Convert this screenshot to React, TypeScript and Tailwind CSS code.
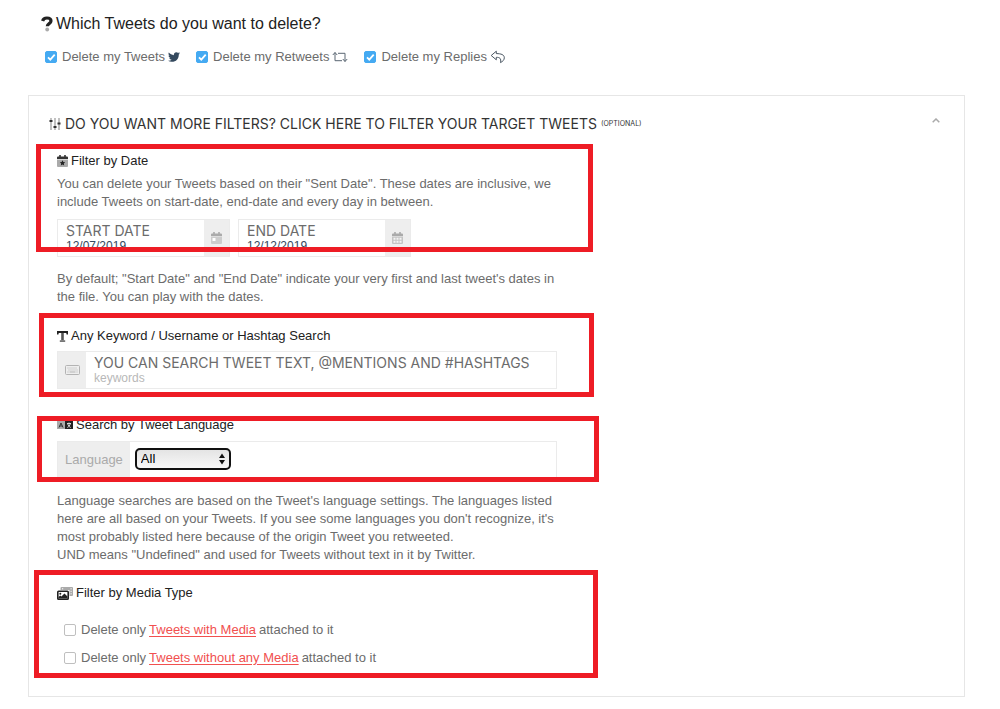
import { useState } from "react";
import type { ReactNode } from "react";
import { FaTwitter } from "react-icons/fa";

const QuestionIcon = () => (
  <svg viewBox="0 0 12 16" className="h-4 w-3 shrink-0" aria-hidden="true">
    <path
      d="M1.600 5C2.200 2.800 3.700 2 5.900 2c2.600 0 4.100 1.200 4.100 3 0 2.700-3.700 2.600-3.700 5.300"
      fill="none"
      stroke="#222"
      strokeWidth="3.200"
    />
    <circle cx="6.200" cy="13.500" r="1.900" fill="#aaa" />
  </svg>
);

const RetweetIcon = () => (
  <svg viewBox="0 0 16 12" className="h-3 w-4 shrink-0" fill="none" stroke="#5b6773" aria-hidden="true">
    <path d="M.8 4 3 1.500 5.200 4M3 1.500V9.700H10M6 2.300h7v8.200M10.800 8l2.200 2.500L15.200 8" />
  </svg>
);

const ReplyIcon = () => (
  <svg viewBox="0 0 16 14" className="h-[14px] w-4 shrink-0" fill="none" stroke="#4b5763" strokeLinejoin="round" aria-hidden="true">
    <path d="M6.300 1.200 1.200 5.500l5.100 4.300V7.300c3.300 0 5.100.9 4.200 5.300 2.400-1.300 3.800-2.700 3.800-4.800 0-3.100-3.100-4.200-8-4.200z" />
  </svg>
);

const SlidersIcon = () => (
  <svg viewBox="0 0 12 14" className="h-[14px] w-3 shrink-0" aria-hidden="true">
    <path d="M2 1v12M6 1v12M10 1v12" stroke="#999" strokeWidth="1.200" />
    <path d="M.5 4h3M4.500 10h3M8.500 6.500h3" stroke="#333" strokeWidth="1.800" />
  </svg>
);

const CalendarStarIcon = () => (
  <svg viewBox="0 0 11 12" className="h-3 w-[11px] shrink-0" aria-hidden="true">
    <path d="M0 4.500h11V11a1 1 0 0 1-1 1H1a1 1 0 0 1-1-1z" fill="#aaa" />
    <path d="M0 4V2.500a1 1 0 0 1 1-1h1.200V0h1.600v1.500h3.400V0h1.600v1.500H10a1 1 0 0 1 1 1V4z" fill="#333" />
    <path d="m5.500 5.300.8 1.700 1.900.2-1.400 1.300.4 1.900-1.700-1-1.700 1 .4-1.900-1.400-1.300 1.900-.2z" fill="#222" />
  </svg>
);

const CalendarDayIcon = () => (
  <svg viewBox="0 0 11 12" className="h-3 w-[11px]" aria-hidden="true">
    <path d="M0 4.500h11V11a1 1 0 0 1-1 1H1a1 1 0 0 1-1-1z" fill="#ccc" />
    <path d="M0 4V2.500a1 1 0 0 1 1-1h1.200V0h1.600v1.500h3.400V0h1.600v1.500H10a1 1 0 0 1 1 1V4z" fill="#aaa" />
    <path d="M1.500 6h3v3h-3z" fill="#fff" />
  </svg>
);

const CalendarGridIcon = () => (
  <svg viewBox="0 0 11 12" className="h-3 w-[11px]" aria-hidden="true">
    <path d="M0 4.500h11V11a1 1 0 0 1-1 1H1a1 1 0 0 1-1-1z" fill="#c4c4c4" />
    <path d="M0 4V2.500a1 1 0 0 1 1-1h1.200V0h1.600v1.500h3.400V0h1.600v1.500H10a1 1 0 0 1 1 1V4z" fill="#aaa" />
    <path d="M1.500 5.700h2v2h-2zm3 0h2v2h-2zm3 0h2v2h-2zm-6 3h2v2h-2zm3 0h2v2h-2zm3 0h2v2h-2z" fill="#f4f4f4" />
  </svg>
);

const TextIcon = () => (
  <svg viewBox="0 0 11 11" className="h-[11px] w-[11px] shrink-0" aria-hidden="true">
    <path d="M4.200 2h2.600v7.500H4.200z" fill="#555" />
    <path d="M0 0h11v3.500H9.600L9.200 2H1.800l-.4 1.500H0z" fill="#222" />
    <path d="M2.800 9.200h5.400V11H2.800z" fill="#777" />
  </svg>
);

const KeyboardIcon = () => (
  <svg viewBox="0 0 15 10" className="h-[10px] w-[15px]" fill="none" stroke="#b3b3b3" aria-hidden="true">
    <rect x=".5" y=".5" width="14" height="9" rx="1" />
    <path d="M2.500 3h10M3.500 5h9" strokeDasharray="1 1" />
    <path d="M2.500 7h1M4.500 7h6M11.500 7h1" />
  </svg>
);

const LanguageIcon = () => (
  <svg viewBox="0 0 16 10" className="h-[10px] w-4 shrink-0" aria-hidden="true">
    <path d="M0 1h8v8H0z" fill="#aaa" />
    <path d="M8 1h8v8H8z" fill="#222" />
    <path d="M2 7.500 4 3l2 4.500M2.800 6h2.400" fill="none" stroke="#333" />
    <path d="M10 3.500h4M12 2.500v1M13.300 3.700c-.5 2-1.500 3-3 3.800M10.700 3.700c.5 2 1.500 3 3 3.800" fill="none" stroke="#fff" strokeWidth=".8" />
  </svg>
);

const MediaIcon = () => (
  <svg viewBox="0 0 16 13" className="h-[13px] w-4 shrink-0" aria-hidden="true">
    <path d="M4.500 0H15a1 1 0 0 1 1 1v7a1 1 0 0 1-1 1h-2.500V3H3.500V1a1 1 0 0 1 1-1z" fill="#aaa" />
    <path d="M13.500 1.800h1.200M13.500 4.300h1.200M13.500 6.800h1.200M5 1.800h1.200" stroke="#fff" />
    <rect x=".8" y="4.300" width="10.400" height="7.900" rx=".8" fill="#fff" stroke="#222" strokeWidth="1.600" />
    <circle cx="3.300" cy="6.700" r="1" fill="#222" />
    <path d="M1.500 11.500V10l1.700-1.500 1.200 1L7.500 6.500l3 3v2z" fill="#222" />
  </svg>
);

type TickProps = {
  checked: boolean;
  onChange: () => void;
  children: ReactNode;
};

function Tick({ checked, onChange, children }: TickProps) {
  return (
    <label className="flex items-center gap-[5px]">
      <span className="relative flex h-3 w-3">
        <input
          type="checkbox"
          checked={checked}
          onChange={onChange}
          className="peer h-3 w-3 appearance-none rounded-[2px] border border-[#bfbfbf] bg-white checked:border-[#45aaf2] checked:bg-[#45aaf2]"
        />
        <svg
          viewBox="0 0 12 12"
          className="pointer-events-none absolute inset-0 hidden h-3 w-3 peer-checked:block"
          fill="none"
          stroke="#fff"
          strokeWidth="1.800"
        >
          <path d="m3 6.300 2.300 2.300L9.700 3.700" />
        </svg>
      </span>
      <span className="flex items-center gap-[3px]">{children}</span>
    </label>
  );
}

type DateFieldProps = {
  label: string;
  value: string;
  onChange: (value: string) => void;
  icon: ReactNode;
};

function DateField({ label, value, onChange, icon }: DateFieldProps) {
  return (
    <label className="flex h-[38px] w-[173px] border border-[#ebebeb]">
      <span className="flex min-w-0 flex-1 flex-col px-2 pt-[3px]">
        <span className="font-[Inter,sans-serif] text-[14px] leading-4 text-[#6c6c6c]">{label}</span>
        <input
          value={value}
          onChange={(e) => onChange(e.target.value)}
          className="w-full text-[12px] leading-[14px] text-[#34495e] outline-none"
        />
      </span>
      <span className="flex w-[25px] items-center justify-center bg-[#eee]">{icon}</span>
    </label>
  );
}

export default function App() {
  const [types, setTypes] = useState({ tweets: true, retweets: true, replies: true });
  const [open, setOpen] = useState(true);
  const [startDate, setStartDate] = useState("12/07/2019");
  const [endDate, setEndDate] = useState("12/12/2019");
  const [keywords, setKeywords] = useState("");
  const [withMedia, setWithMedia] = useState(false);
  const [withoutMedia, setWithoutMedia] = useState(false);

  return (
    <main className="min-h-screen bg-white pt-3 pr-[35px] pb-3 pl-7 font-['Liberation_Sans',Arial,sans-serif] text-[13px] leading-[18px] text-[#6c6c6c]">
      <h1 className="flex items-center gap-[3px] pl-[13px] text-[16px] leading-6 text-[#222]">
        <QuestionIcon />
        Which Tweets do you want to delete?
      </h1>

      <div className="mt-3 flex flex-wrap gap-4 pl-[17px]">
        <Tick checked={types.tweets} onChange={() => setTypes({ ...types, tweets: !types.tweets })}>
          Delete my Tweets <FaTwitter className="h-3 w-3 text-[#34495e]" />
        </Tick>
        <Tick checked={types.retweets} onChange={() => setTypes({ ...types, retweets: !types.retweets })}>
          Delete my Retweets <RetweetIcon />
        </Tick>
        <Tick checked={types.replies} onChange={() => setTypes({ ...types, replies: !types.replies })}>
          Delete my Replies <ReplyIcon />
        </Tick>
      </div>

      <section className="mt-[29px] border border-[#e6e6e6] pt-4 pb-[29px]">
        <button
          type="button"
          onClick={() => setOpen(!open)}
          className="flex w-full items-center gap-1 pr-6 pl-5 text-left font-[Inter,sans-serif] text-[14px] leading-6 text-[#333]"
        >
          <SlidersIcon />
          DO YOU WANT MORE FILTERS? CLICK HERE TO FILTER YOUR TARGET TWEETS
          <span className="text-[7px]">(OPTIONAL)</span>
          <svg viewBox="0 0 8 5" className="mb-2 ml-auto h-[5px] w-2" fill="none" stroke="#aaa" strokeWidth="1.500">
            <path d="m.7 4.300 3.300-3.300 3.300 3.300" />
          </svg>
        </button>

        {open && (
          <div className="mt-4 max-w-[528px] pl-7">
            <div className="relative">
              <h2 className="flex items-center gap-[3px] text-[#222]">
                <CalendarStarIcon />
                Filter by Date
              </h2>
              <p className="mt-[5px]">
                You can delete your Tweets based on their "Sent Date". These dates are inclusive, we
                <br />
                include Tweets on start-date, end-date and every day in between.
              </p>
              <div className="mt-2 flex gap-2">
                <DateField label="START DATE" value={startDate} onChange={setStartDate} icon={<CalendarDayIcon />} />
                <DateField label="END DATE" value={endDate} onChange={setEndDate} icon={<CalendarGridIcon />} />
              </div>
              <div className="pointer-events-none absolute -top-2 -right-9 bottom-[5px] -left-[21px] border-5 border-[#ee1c25]" />
            </div>

            <p className="mt-[13px]">
              By default; "Start Date" and "End Date" indicate your very first and last tweet's dates in
              <br />
              the file. You can play with the dates.
            </p>

            <div className="relative mt-[21px]">
              <h2 className="flex items-center gap-[3px] text-[#222]">
                <TextIcon />
                Any Keyword / Username or Hashtag Search
              </h2>
              <label className="mt-[6px] flex h-[38px] border border-[#ebebeb]">
                <span className="flex w-7 items-center justify-center bg-[#eee]">
                  <KeyboardIcon />
                </span>
                <span className="flex min-w-0 flex-1 flex-col px-2 pt-[3px]">
                  <span className="font-[Inter,sans-serif] text-[14px] leading-4 text-[#6c6c6c]">
                    YOU CAN SEARCH TWEET TEXT, @MENTIONS AND #HASHTAGS
                  </span>
                  <input
                    value={keywords}
                    onChange={(e) => setKeywords(e.target.value)}
                    placeholder="keywords"
                    className="w-full text-[12px] leading-[14px] text-[#34495e] outline-none placeholder:text-[#b8b8b8]"
                  />
                </span>
              </label>
              <div className="pointer-events-none absolute -top-[14px] -right-[37px] -bottom-2 -left-[18px] border-5 border-[#ee1c25]" />
            </div>

            <div className="relative mt-[27px]">
              <h2 className="flex items-center gap-[3px] text-[#222]">
                <LanguageIcon />
                Search by Tweet Language
              </h2>
              <div className="mt-[7px] flex h-[38px] items-stretch border border-[#ebebeb]">
                <label htmlFor="language" className="flex items-center bg-[#eee] px-[7px] text-[#aaa]">
                  Language
                </label>
                <div className="relative ml-[5px] flex h-[34px] items-center">
                  <select
                    id="language"
                    className="h-[22px] w-24 appearance-none rounded-[5px] border-2 border-[#111] bg-linear-to-b from-[#e4e4e4] to-[#f8f8f8] pl-1 text-[13px] leading-4 text-black"
                  >
                    <option>All</option>
                  </select>
                  <svg viewBox="0 0 6 12" className="pointer-events-none absolute right-[6px] h-3 w-[6px]" fill="#111">
                    <path d="M0 5 3 .5 6 5zM0 7l3 4.500L6 7z" />
                  </svg>
                </div>
              </div>
              <div className="pointer-events-none absolute top-0 -right-[42px] -bottom-[3px] -left-5 border-5 border-[#ee1c25]" />
            </div>

            <p className="mt-[13px]">
              Language searches are based on the Tweet's language settings. The languages listed
              <br />
              here are all based on your Tweets. If you see some languages you don't recognize, it's
              <br />
              most probably listed here because of the origin Tweet you retweeted.
              <br />
              UND means "Undefined" and used for Tweets without text in it by Twitter.
            </p>

            <div className="relative mt-5">
              <h2 className="flex items-center gap-[3px] text-[#222]">
                <MediaIcon />
                Filter by Media Type
              </h2>
              <div className="mt-[19px] flex flex-col gap-[10px] pl-[7px]">
                <Tick checked={withMedia} onChange={() => setWithMedia(!withMedia)}>
                  Delete only{" "}
                  <a href="#with-media" className="text-[#f1504f] underline underline-offset-2">
                    Tweets with Media
                  </a>{" "}
                  attached to it
                </Tick>
                <Tick checked={withoutMedia} onChange={() => setWithoutMedia(!withoutMedia)}>
                  Delete only{" "}
                  <a href="#without-media" className="text-[#f1504f] underline underline-offset-2">
                    Tweets without any Media
                  </a>{" "}
                  attached to it
                </Tick>
              </div>
              <div className="pointer-events-none absolute -top-[14px] -right-[41px] -bottom-[11px] -left-[23px] border-5 border-[#ee1c25]" />
            </div>
          </div>
        )}
      </section>
    </main>
  );
}
